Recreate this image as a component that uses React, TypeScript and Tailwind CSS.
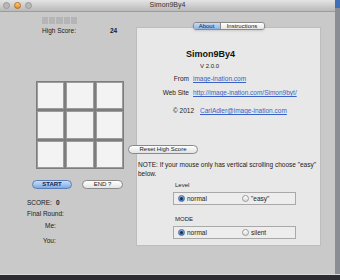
import React from "react";

const font = { fontFamily: '"Liberation Sans", Arial, sans-serif' };

function Radio({ on, label }: { on?: boolean; label: string }) {
  return (
    <div className="flex items-center gap-[2px]">
      {on ? (
        <span className="w-[7px] h-[7px] rounded-full bg-gradient-to-b from-[#8fb6e6] to-[#3d74c4] border border-[#4a6fa8] flex items-center justify-center">
          <span className="w-[3px] h-[3px] rounded-full bg-[#1d2c48]" />
        </span>
      ) : (
        <span className="w-[7px] h-[7px] rounded-full bg-gradient-to-b from-white to-[#dcdcdc] border border-[#9a9a9a]" />
      )}
      <span>{label}</span>
    </div>
  );
}

function Group({ title, left, right }: { title: string; left: string; right: string }) {
  return (
    <div className="ml-[36px] w-[123px]">
      <div className="pl-[2px] leading-[7px] text-[6px] text-[#222]">{title}</div>
      <div className="mt-[3px] h-[13px] border border-[#a9a9a9] bg-[#ededed] flex items-center pl-[4px] text-[6.5px] text-[#222]">
        <div className="w-[64px]">
          <Radio on label={left} />
        </div>
        <Radio label={right} />
      </div>
    </div>
  );
}

export default function App() {
  return (
    <div className="w-[340px] h-[280px] flex flex-col overflow-hidden bg-[#6d7078]" style={font}>
      <div className="flex h-[274px]">
        <div className="w-[335px] flex flex-col bg-[#c9c9c9]">
          {/* title bar */}
          <div className="h-[12px] relative flex items-center justify-center bg-gradient-to-b from-[#e4e4e4] to-[#b9b9b9] border-b border-[#9c9c9c]">
            <div className="absolute left-[3px] top-[2px] flex gap-[4px]">
              <span className="w-[7px] h-[7px] rounded-full bg-[#b8b8b8] border border-[#999]" />
              <span className="w-[7px] h-[7px] rounded-full bg-gradient-to-b from-[#ffd27a] to-[#e88a1a] border border-[#b07020]" />
              <span className="w-[7px] h-[7px] rounded-full bg-[#b8b8b8] border border-[#999]" />
            </div>
            <span className="text-[7px] text-[#333]">Simon9By4</span>
          </div>

          <div className="flex-1 flex">
            {/* left column */}
            <div className="w-[136px] flex flex-col text-[6.5px] text-[#1a1a1a]">
              <div className="ml-[42px] mt-[5px] w-[35px] h-[7px] flex gap-[1px]">
                <span className="flex-1 bg-[#b5b5b5]" />
                <span className="flex-1 bg-[#b5b5b5]" />
                <span className="flex-1 bg-[#b5b5b5]" />
                <span className="flex-1 bg-[#b5b5b5]" />
                <span className="flex-1 bg-[#b5b5b5]" />
              </div>
              <div className="ml-[42px] mt-[3px] flex leading-[8px]">
                <span className="w-[68px]">High Score:</span>
                <span className="font-bold">24</span>
              </div>

              <div className="ml-[36px] mt-[46px] w-[88px] h-[88px] grid grid-cols-3 gap-[2px] bg-[#7d7d7d] p-[1px]">
                {Array.from({ length: 9 }).map((_, i) => (
                  <div key={i} className="bg-[#f3f3f3] border border-[#9c9c9c]" />
                ))}
              </div>

              <div className="mt-[11px] ml-[32px] flex gap-[10px]">
                <div className="w-[40px] h-[9px] rounded-full border border-[#5a7fb5] bg-gradient-to-b from-[#c9def7] to-[#7eaae3] flex items-center justify-center text-[6px] font-bold text-[#0f2550]">
                  START
                </div>
                <div className="w-[41px] h-[9px] rounded-full border border-[#8a8a8a] bg-gradient-to-b from-white to-[#e4e4e4] flex items-center justify-center text-[6px] text-[#222]">
                  END ?
                </div>
              </div>

              <div className="ml-[27px] mt-[10px] flex leading-[8px]">
                <span className="w-[29px]">SCORE:</span>
                <span className="font-bold">0</span>
              </div>
              <div className="ml-[27px] mt-[3px] leading-[8px]">Final Round:</div>
              <div className="ml-[45px] mt-[4px] leading-[8px]">Me:</div>
              <div className="ml-[43px] mt-[7px] leading-[8px]">You:</div>
            </div>

            {/* right column */}
            <div className="w-[185px] flex flex-col pt-[10px]">
              <div className="relative z-10 flex justify-center -mb-[3px]">
                <div className="flex h-[8px] rounded-[3px] border border-[#8a8a8a] overflow-hidden text-[6px] leading-[6px] shadow-sm">
                  <span className="w-[27px] flex items-center justify-center bg-gradient-to-b from-[#c9dcf5] to-[#8db3e6] text-[#0f2550] border-r border-[#8a8a8a]">
                    About
                  </span>
                  <span className="w-[43px] flex items-center justify-center bg-gradient-to-b from-white to-[#e6e6e6] text-[#222]">
                    Instructions
                  </span>
                </div>
              </div>
              <div className="h-[219px] bg-[#e8e8e8] border border-[#bdbdbd] flex flex-col text-[6.5px] text-[#222]">
                <div className="ml-[49px] mt-[21px] text-[9px] font-bold leading-[10px] text-[#111]">Simon9By4</div>
                <div className="ml-[63px] mt-[3px] leading-[8px] text-[6px]">V 2.0.0</div>
                <div className="mt-[5px] flex leading-[8px]">
                  <span className="w-[56px] text-right pr-[4px]">From</span>
                  <span className="text-[#3a62c6] underline">image-ination.com</span>
                </div>
                <div className="mt-[6px] flex leading-[8px]">
                  <span className="w-[56px] text-right pr-[4px]">Web Site</span>
                  <span className="text-[#3a62c6] underline">http://image-ination.com/Simon9byt/</span>
                </div>
                <div className="mt-[10px] flex leading-[8px]">
                  <span className="w-[62px] pl-[36px]">© 2012</span>
                  <span className="ml-[1px] text-[#3a62c6] underline">CarlAdler@image-ination.com</span>
                </div>

                <div className="mt-[30px] -ml-[9px] w-[70px] h-[9px] rounded-full border border-[#8a8a8a] bg-gradient-to-b from-white to-[#e2e2e2] flex items-center justify-center text-[6px]">
                  Reset High Score
                </div>
                <div className="ml-[1px] mt-[6px] leading-[9px] w-[180px]">
                  NOTE: If your mouse only has vertical scrolling choose "easy" below.
                </div>
                <div className="mt-[4px]">
                  <Group title="Level" left="normal" right={'"easy"'} />
                </div>
                <div className="mt-[11px]">
                  <Group title="MODE" left="normal" right="silent" />
                </div>
              </div>
            </div>
          </div>
        </div>
        <div className="flex-1 flex flex-col">
          <div className="h-[8px] bg-[#3f6fb8]" />
          <div className="flex-1 bg-[#8a8d94]" />
        </div>
      </div>
      <div className="h-[6px] bg-[#2b2d33] border-t border-[#d9d9d9]" />
    </div>
  );
}
